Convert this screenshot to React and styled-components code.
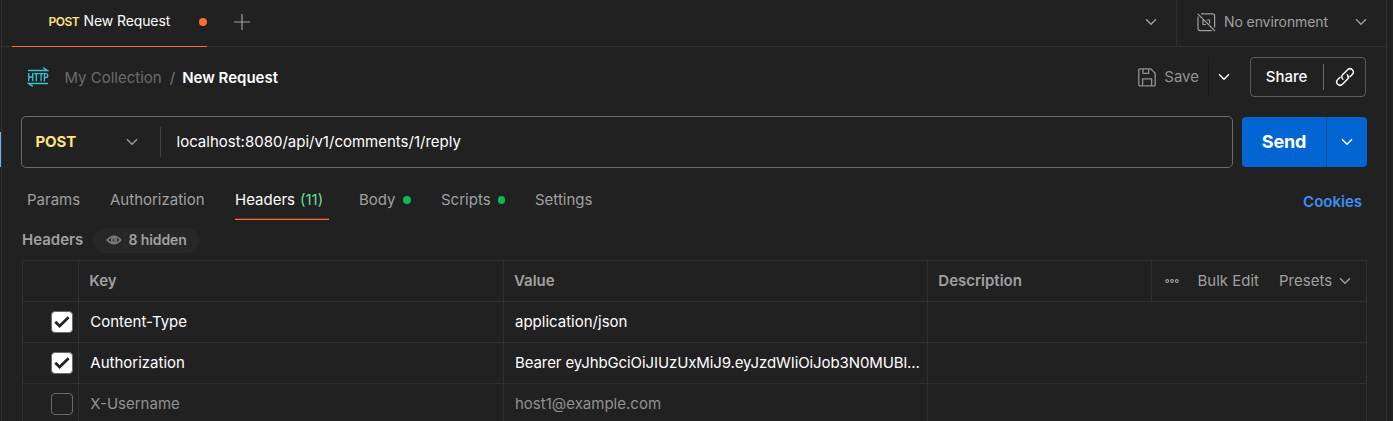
import React from "react";
import styled, { createGlobalStyle } from "styled-components";

const Global = createGlobalStyle`
  * { box-sizing: border-box; }
  body { margin: 0; background: #212121; color: #fff; font: 400 15px/20px Inter, "Liberation Sans", sans-serif; overflow: hidden; }
  svg { display: block; flex: none; }
  button { font: inherit; color: inherit; background: none; border: 0; padding: 0; }
`;

const line = "#303030";
const muted = "#a0a0a0";

const Window = styled.div`
  position: relative;
  display: flex;
  width: 1393px;
  height: 421px;
  overflow: hidden;
  background: #212121;
  white-space: nowrap;
`;
const SideMarker = styled.div`
  position: absolute;
  left: 0;
  top: 132px;
  width: 1px;
  height: 35px;
  background: #74aef6;
`;
const Panel = styled.main`
  display: flex;
  flex-direction: column;
  width: 1386px;
  margin-left: 1px;
  border-left: 1px solid ${line};
  border-right: 1px solid ${line};
`;
const Label = styled.span`
  color: ${(p) => p.$color || "inherit"};
  font-weight: ${(p) => p.$weight || 400};
  font-size: ${(p) => p.$size || 15}px;
  letter-spacing: ${(p) => p.$track || 0}px;
`;

const TopBar = styled.header`
  display: flex;
  flex: none;
  height: 47px;
  padding-left: 10px;
  border-bottom: 1px solid ${line};
`;
const FileTab = styled.div`
  display: flex;
  align-items: center;
  width: 195px;
  height: 47px;
  padding: 0 0 3px 36.5px;
  border-bottom: 1px solid #ff6c37;
  line-height: 20px;
`;
const Dot = styled.i`
  width: 8px;
  height: 8px;
  border-radius: 50%;
  background: ${(p) => p.$color};
`;
const TabMethod = styled(Label)`
  width: 30px;
`;
const TabName = styled(Label)`
  width: 117px;
  margin: -1px 0 0 5px;
`;
const AddButton = styled.button`
  display: flex;
  align-items: center;
  margin-left: 27px;
  height: 44px;
`;
const TabListToggle = styled.button`
  display: flex;
  align-items: center;
  margin-left: auto;
  height: 44px;
  padding-right: 19px;
`;
const Environment = styled.div`
  display: flex;
  align-items: center;
  width: 210px;
  height: 46px;
  padding: 0 19px 2px 20px;
  border-left: 1px solid ${line};
  color: ${muted};
  & > span { margin-left: 8px; }
  & > svg:last-child { margin-left: auto; }
`;

const TitleRow = styled.div`
  display: flex;
  flex: none;
  align-items: center;
  height: 60px;
  padding: 0 20px 0 25px;
`;
const Breadcrumb = styled.div`
  display: flex;
  margin: 1px 0 0 15.5px;
`;
const Slash = styled.span`
  width: 20.5px;
  padding-left: 8px;
  color: #777;
`;
const SaveButton = styled.button`
  display: flex;
  align-items: center;
  gap: 8px;
  height: 40px;
  margin-left: auto;
  padding-right: 9px;
  border-right: 1px solid #191919;
  color: #929292;
`;
const SaveToggle = styled.button`
  padding: 0 20px 0 9px;
`;
const ShareGroup = styled.div`
  display: flex;
  align-items: center;
  width: 116px;
  height: 40px;
  border: 1px solid #5c5c5c;
  border-radius: 4px;
`;
const ShareButton = styled.button`
  width: 73px;
  height: 26px;
  padding-right: 1px;
  border-right: 1px solid #6b6b6b;
`;
const LinkButton = styled.button`
  display: flex;
  flex: 1;
  justify-content: center;
`;

const RequestRow = styled.div`
  display: flex;
  flex: none;
  align-items: center;
  gap: 9px;
  margin: 9px 19px 0 19px;
`;
const UrlBox = styled.div`
  display: flex;
  align-items: center;
  width: 1212px;
  height: 52px;
  border: 1px solid #6b6b6b;
  border-radius: 5px;
`;
const Method = styled.div`
  display: flex;
  align-items: center;
  justify-content: space-between;
  width: 139px;
  height: 30px;
  padding: 0 22px 0 13.5px;
  border-right: 1px solid #404040;
`;
const Url = styled(Label)`
  padding-left: 15.5px;
`;
const SendGroup = styled.div`
  display: flex;
  width: 125px;
  height: 50px;
  border-radius: 4px;
  background: #0265d2;
`;
const SendButton = styled.button`
  width: 85px;
  border-right: 1px solid #05509f;
`;
const SendToggle = styled.button`
  display: flex;
  flex: 1;
  align-items: center;
  justify-content: center;
`;

const SectionTabs = styled.nav`
  display: flex;
  flex: none;
  height: 52px;
  padding: 0 24px 0 25px;
  color: ${muted};
`;
const SectionTab = styled.div`
  display: flex;
  align-items: center;
  gap: ${(p) => p.$gap || 0}px;
  width: ${(p) => p.$w}px;
  height: 52px;
  padding-top: 12px;
  margin-right: ${(p) => p.$after || 0}px;
  border-bottom: 1px solid ${(p) => (p.$active ? "#ff6c37" : "transparent")};
  box-shadow: ${(p) => (p.$active ? "inset 0 -1px 0 #5e3629" : "none")};
`;
const CookiesLink = styled(Label)`
  margin: 24px 0 0 auto;
`;

const HeadersBar = styled.div`
  display: flex;
  flex: none;
  align-items: center;
  height: 40px;
  padding-left: 20px;
  color: ${muted};
`;
const HeadersTitle = styled(Label)`
  width: 61px;
`;
const HiddenPill = styled.div`
  display: flex;
  align-items: center;
  gap: 7px;
  width: 106px;
  height: 25px;
  margin-left: 10px;
  padding-left: 12.5px;
  border-radius: 13px;
  background: #272727;
`;

const Table = styled.div`
  flex: none;
  width: 1345px;
  margin-left: 20px;
  border: 1px solid ${line};
`;
const Row = styled.div`
  display: grid;
  grid-template-columns: ${(p) => (p.$head ? "56px 425px 424px 224px 214px" : "56px 425px 424px 438px")};
  height: 41px;
  border-bottom: 1px solid ${line};
  color: ${(p) => (p.$head ? muted : p.$off ? "#929292" : "#fff")};
`;
const Cell = styled.div`
  display: flex;
  align-items: center;
  min-width: 0;
  padding: 0 0 0 ${(p) => p.$pad || 11.3}px;
  border-right: 1px solid ${line};
  &:last-child { border-right: 0; }
`;
const Tools = styled(Cell)`
  padding-left: 13px;
  & > span { margin-left: 18.5px; }
  & > span + span { margin-left: 20px; }
  & > svg:last-child { margin-left: 6.5px; }
`;
const CheckBox = styled.div`
  display: grid;
  place-items: center;
  width: 22px;
  height: 22px;
  border: 1px solid #6b6b6b;
  border-radius: 4px;
  background: ${(p) => (p.$on ? "#fff" : "transparent")};
`;

const Chevron = ({ color = muted }) => (
  <svg width="12" height="8" viewBox="0 0 12 8" fill="none" stroke={color} strokeWidth="1.35">
    <path d="M1 1.3 6 6.3 11 1.3" />
  </svg>
);

const HttpIcon = () => (
  <svg width="22" height="20" viewBox="0 0 22 20" fill="none" stroke="#35c6d8" strokeWidth="1.3">
    <path d="M1 3.5H20.6L16.2.6M21 16.5H1.4L5.8 19.4" />
    <path d="M1.7 6V14.2M5.7 6V14.2M1.7 10H5.7M7 6.6H11.6M9.3 6.6V14.2M11.8 6.6H16.4M14.1 6.6V14.2M17.4 14.2V6.6H19.2Q20.8 6.6 20.8 8.5T19.2 10.5H17.4" />
  </svg>
);

const NoEnvIcon = () => (
  <svg width="19" height="19" viewBox="0 0 19 19" fill="none" stroke={muted} strokeWidth="1.2">
    <path d="M4 .9H15.6Q17.6.9 17.6 2.9V14.5M14.8 17.6H3Q1 17.6 1 15.6V3.5M.8.8 18 18" />
    <path d="M8 7.5H6V11.5H9M9.8 7H12.6V10.6" />
  </svg>
);

const SaveIcon = () => (
  <svg width="18" height="19" viewBox="0 0 18 19" fill="none" stroke="#929292" strokeWidth="1.3">
    <path d="M1.8 .9H12.8L17.2 5.3V17Q17.2 17.9 16.3 17.9H1.8Q.8 17.9.8 16.8V2Q.8.9 1.8.9Z" />
    <path d="M5 1V5.4H10.6V1M4.6 17.8V10.8H13.6V17.8" />
  </svg>
);

const LinkIcon = () => (
  <svg width="20" height="20" viewBox="0 0 20 20" fill="none" stroke="#fff" strokeWidth="1.4" strokeLinecap="round">
    <g transform="translate(10 10) rotate(-45)">
      <path d="M3.6 3.3H7A3.3 3.3 0 0 0 7-3.3H.2A3.3 3.3 0 0 0-3.1 0" />
      <path d="M-3.6-3.3H-7A3.3 3.3 0 0 0-7 3.3H-.2A3.3 3.3 0 0 0 3.1 0" />
    </g>
  </svg>
);

const EyeIcon = () => (
  <svg width="16" height="10" viewBox="0 0 16 10" fill="none" stroke="#7b7b7b" strokeWidth="1.6">
    <path d="M1.2 5Q8-2.4 14.8 5Q8 12.4 1.2 5Z" />
    <circle cx="8" cy="5" r="2.4" />
    <path d="M8 3.8V5.3H9.5" strokeWidth="1.1" />
  </svg>
);

const DotsIcon = () => (
  <svg width="14" height="6" viewBox="0 0 14 6" fill="none" stroke={muted} strokeWidth="1.1">
    <circle cx="2.2" cy="3" r="1.4" />
    <circle cx="7" cy="3" r="1.4" />
    <circle cx="11.8" cy="3" r="1.4" />
  </svg>
);

const CheckIcon = () => (
  <svg width="16" height="12" viewBox="0 0 16 12" fill="none" stroke="#212121" strokeWidth="2.7">
    <path d="M1.3 5.8 5.6 10 14.6 1.3" />
  </svg>
);

const rows = [
  { on: true, key: "Content-Type", value: "application/json" },
  { on: true, key: "Authorization", value: "Bearer eyJhbGciOiJIUzUxMiJ9.eyJzdWIiOiJob3N0MUBl...", track: -0.1 },
  { on: false, key: "X-Username", value: "host1@example.com" },
];

export default function App() {
  return (
    <Window>
      <Global />
      <SideMarker />
      <Panel>
        <TopBar>
          <FileTab>
            <TabMethod $color="#ffe47e" $weight={600} $size={12} $track={-0.5}>POST</TabMethod>
            <TabName $size={14} $track={-0.1}>New Request</TabName>
            <Dot $color="#ff6c37" />
          </FileTab>
          <AddButton>
            <svg width="16" height="16" viewBox="0 0 16 16" stroke="#a0a0a0" strokeWidth="1.2">
              <path d="M0 8H16M8 0V16" />
            </svg>
          </AddButton>
          <TabListToggle><Chevron /></TabListToggle>
          <Environment>
            <NoEnvIcon />
            <Label $size={14} $track={-0.1}>No environment</Label>
            <Chevron />
          </Environment>
        </TopBar>

        <TitleRow>
          <HttpIcon />
          <Breadcrumb>
            <Label $color="#6b6b6b">My Collection</Label>
            <Slash>/</Slash>
            <Label $weight={600}>New Request</Label>
          </Breadcrumb>
          <SaveButton>
            <SaveIcon />
            <Label>Save</Label>
          </SaveButton>
          <SaveToggle><Chevron color="#fff" /></SaveToggle>
          <ShareGroup>
            <ShareButton><Label $weight={500}>Share</Label></ShareButton>
            <LinkButton><LinkIcon /></LinkButton>
          </ShareGroup>
        </TitleRow>

        <RequestRow>
          <UrlBox>
            <Method>
              <Label $color="#ffe47e" $weight={700} $track={-0.1}>POST</Label>
              <Chevron />
            </Method>
            <Url>localhost:8080/api/v1/comments/1/reply</Url>
          </UrlBox>
          <SendGroup>
            <SendButton><Label $weight={700} $size={18} $track={-0.2}>Send</Label></SendButton>
            <SendToggle><Chevron color="#fff" /></SendToggle>
          </SendGroup>
        </RequestRow>

        <SectionTabs>
          <SectionTab $w={53} $after={30}>Params</SectionTab>
          <SectionTab $w={95} $after={30}>Authorization</SectionTab>
          <SectionTab $w={94} $after={30} $gap={5} $active>
            <Label $color="#fff">Headers</Label>
            <Label $color="#6bdd9a">(11)</Label>
          </SectionTab>
          <SectionTab $w={52} $after={30} $gap={7}>Body <Dot $color="#0cbb52" /></SectionTab>
          <SectionTab $w={64} $after={30} $gap={7}>Scripts <Dot $color="#0cbb52" /></SectionTab>
          <SectionTab $w={59}>Settings</SectionTab>
          <CookiesLink $color="#3d8ff5" $weight={600}>Cookies</CookiesLink>
        </SectionTabs>

        <HeadersBar>
          <HeadersTitle $weight={600}>Headers</HeadersTitle>
          <HiddenPill>
            <EyeIcon />
            <Label $weight={600} $size={14} $track={-0.1}>8 hidden</Label>
          </HiddenPill>
        </HeadersBar>

        <Table>
          <Row $head>
            <Cell />
            <Cell $pad={10.3}><Label $weight={600}>Key</Label></Cell>
            <Cell $pad={10}><Label $weight={600}>Value</Label></Cell>
            <Cell $pad={10.3}><Label $weight={600}>Description</Label></Cell>
            <Tools>
              <DotsIcon />
              <Label>Bulk Edit</Label>
              <Label>Presets</Label>
              <Chevron />
            </Tools>
          </Row>
          {rows.map((r) => (
            <Row key={r.key} $off={!r.on}>
              <Cell $pad={28}><CheckBox $on={r.on}>{r.on && <CheckIcon />}</CheckBox></Cell>
              <Cell>{r.key}</Cell>
              <Cell $pad={11}><Label $track={r.track}>{r.value}</Label></Cell>
              <Cell />
            </Row>
          ))}
        </Table>
      </Panel>
    </Window>
  );
}
